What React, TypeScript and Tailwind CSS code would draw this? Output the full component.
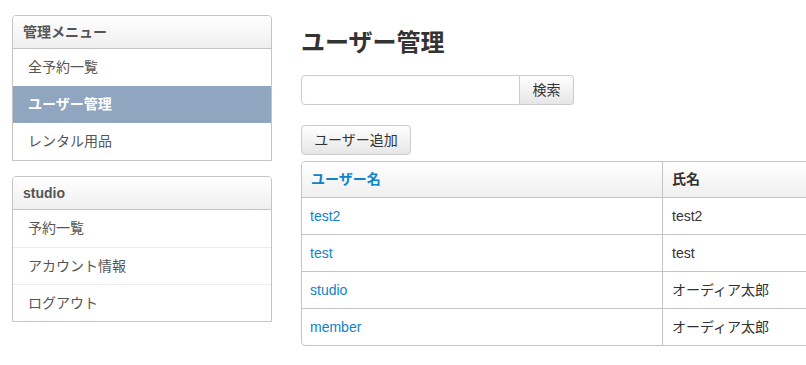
import React from "react";

const font = {
  fontFamily: '"Liberation Sans", "Noto Sans CJK JP", sans-serif'
};

const SidePanel = ({
  title,
  items,
  active,
  divided
}: {
  title: string;
  items: string[];
  active?: string;
  divided?: boolean;
}) => (
  <div className="overflow-hidden rounded-t-[4px] border border-[#c4c4c4] bg-white">
    <div className="flex h-[33px] items-center border-b border-[#c4c4c4] bg-gradient-to-b from-white to-[#efefef] px-[10px] text-[14px] font-bold text-[#555]">
      {title}
    </div>
    {items.map((item, index) => (
      <div
        key={item}
        className={`flex h-[37px] items-center px-[15px] text-[14px] ${
          item === active ? "bg-[#8fa5c0] font-bold text-white" : "text-[#555]"
        } ${divided && index > 0 ? "border-t border-[#ececec]" : ""}`}
      >
        {item}
      </div>
    ))}
  </div>
);

const users = [
  { id: "test2", name: "test2" },
  { id: "test", name: "test" },
  { id: "studio", name: "オーディア太郎" },
  { id: "member", name: "オーディア太郎" }
];

export default function App() {
  return (
    <div className="flex h-[365px] w-[806px] overflow-hidden bg-white" style={font}>
      <div className="ml-[12px] mt-[15px] flex w-[260px] shrink-0 flex-col gap-[15px]">
        <SidePanel
          title="管理メニュー"
          items={["全予約一覧", "ユーザー管理", "レンタル用品"]}
          active="ユーザー管理"
        />
        <SidePanel
          title="studio"
          items={["予約一覧", "アカウント情報", "ログアウト"]}
          divided
        />
      </div>
      <div className="ml-[29px] shrink-0">
        <h1 className="mt-[28px] text-[24px] leading-[30px] font-bold text-[#333]">
          ユーザー管理
        </h1>
        <div className="mt-[17px] flex h-[30px]">
          <input
            className="h-full w-[219px] rounded-l-[4px] border border-[#ccc] bg-white px-2 text-[14px] outline-none"
            type="text"
          />
          <button
            className="h-full w-[54px] rounded-r-[4px] border border-l-0 border-[#ccc] bg-gradient-to-b from-white to-[#e6e6e6] text-[14px] text-[#333]"
            type="button"
          >
            検索
          </button>
        </div>
        <button
          className="mt-[20px] h-[30px] w-[110px] rounded-[4px] border border-[#ccc] bg-gradient-to-b from-white to-[#e6e6e6] text-[14px] text-[#333]"
          type="button"
        >
          ユーザー追加
        </button>
        <div className="mt-[6px] w-[560px] overflow-hidden rounded-[4px] border border-[#c4c4c4]">
          <div className="flex h-[36px] border-b border-[#c4c4c4] bg-gradient-to-b from-white to-[#efefef] text-[14px] font-bold">
            <div className="flex w-[361px] items-center border-r border-[#c4c4c4] px-[9px] text-[#0e84cc]">
              ユーザー名
            </div>
            <div className="flex flex-1 items-center px-[9px] text-[#333]">氏名</div>
          </div>
          {users.map((user) => (
            <div
              key={user.id}
              className="flex h-[37px] border-b border-[#c4c4c4] text-[14px] last:h-[36px] last:border-b-0"
            >
              <div className="flex w-[361px] items-center border-r border-[#c4c4c4] px-[8px] text-[#0e84cc]">
                {user.id}
              </div>
              <div className="flex flex-1 items-center px-[9px] text-[#333]">
                {user.name}
              </div>
            </div>
          ))}
        </div>
      </div>
    </div>
  );
}
